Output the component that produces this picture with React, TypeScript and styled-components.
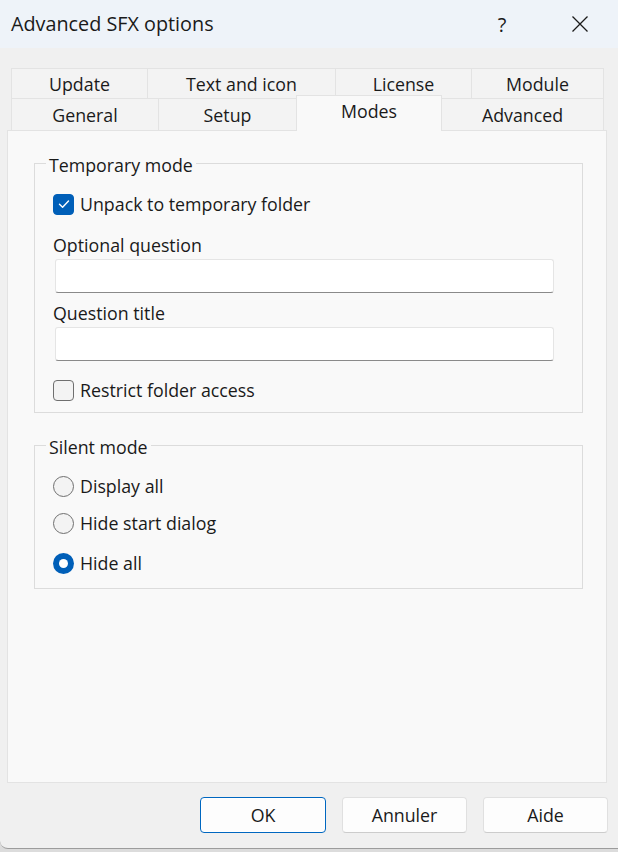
import React, { useState } from 'react';
import styled, { createGlobalStyle, css } from 'styled-components';

const GlobalStyle = createGlobalStyle`
  html, body {
    margin: 0;
    padding: 0;
    background: #dcdcdc;
  }
  body {
    font-family: "Segoe UI", "Open Sans", "Noto Sans", sans-serif;
    font-size: 17.8px;
    color: #1a1a1a;
  }
  * { box-sizing: border-box; }
`;

const Dialog = styled.div`
  width: 618px;
  height: 849px;
  display: flex;
  flex-direction: column;
  background: #f0f0f0;
  border-bottom: 1px solid #9c9c9c;
  border-bottom-left-radius: 8px;
  overflow: hidden;
`;

const TitleBar = styled.div`
  height: 48px;
  flex: none;
  display: flex;
  align-items: center;
  background: #eef3f9;
`;

const Title = styled.div`
  flex: 1;
  padding-left: 11px;
  font-size: 19.8px;
  line-height: 24px;
`;

const CaptionButton = styled.div<{ $w: number }>`
  width: ${({ $w }) => $w}px;
  height: 48px;
  display: flex;
  align-items: center;
  justify-content: center;
  font-size: 20px;
`;

const Body = styled.div`
  flex: 1;
  display: flex;
  flex-direction: column;
  padding: 20px 11px 0 7px;
`;

const TabStrip = styled.div`
  padding-left: 4px;
  padding-right: 4px;
  display: flex;
  flex-direction: column;
`;

const TabRow = styled.div<{ $h: number }>`
  display: flex;
  height: ${({ $h }) => $h}px;
`;

const Tab = styled.div<{ $w: number; $active?: boolean }>`
  width: ${({ $w }) => $w}px;
  flex: none;
  display: flex;
  align-items: center;
  justify-content: center;
  background: #f3f3f3;
  border: 1px solid #e3e3e3;
  border-bottom: none;
  margin-right: -1px;
  line-height: 22px;
  ${({ $active }) => $active && css`
    position: relative;
    z-index: 1;
    background: #f9f9f9;
    margin-top: -3px;
    height: calc(100% + 4px);
    padding-bottom: 5px;
  `}
`;

const Panel = styled.div`
  flex: 1;
  background: #f9f9f9;
  border: 1px solid #e3e3e3;
  padding: 32px 23px 0 26px;
  display: flex;
  flex-direction: column;
  gap: 32px;
`;

const GroupBox = styled.div<{ $pad: string }>`
  position: relative;
  border: 1px solid #dcdcdc;
  padding: ${({ $pad }) => $pad};
  display: flex;
  flex-direction: column;
`;

const Legend = styled.div`
  position: absolute;
  top: -11px;
  left: 11px;
  padding: 0 3px;
  background: #f9f9f9;
  line-height: 24px;
`;

const OptionRow = styled.label<{ $mt?: number }>`
  display: flex;
  align-items: center;
  gap: 6px;
  height: 24px;
  margin-top: ${({ $mt }) => $mt ?? 0}px;
  line-height: 24px;
`;

const CheckBox = styled.span<{ $on?: boolean }>`
  width: 21px;
  height: 21px;
  border-radius: 4px;
  display: flex;
  align-items: center;
  justify-content: center;
  ${({ $on }) => $on
    ? css`background: #005fb8; border: 1px solid #005fb8;`
    : css`background: #f3f3f3; border: 1px solid #6f6f6f;`}
`;

const Radio = styled.span<{ $on?: boolean }>`
  width: 21px;
  height: 21px;
  border-radius: 50%;
  display: flex;
  align-items: center;
  justify-content: center;
  ${({ $on }) => $on
    ? css`
      background: #005fb8;
      &::after {
        content: '';
        width: 9px;
        height: 9px;
        border-radius: 50%;
        background: #fff;
      }
    `
    : css`background: #f3f3f3; border: 1px solid #6f6f6f;`}
`;

const FieldLabel = styled.div<{ $mt: number }>`
  margin-top: ${({ $mt }) => $mt}px;
  line-height: 24px;
`;

const TextInput = styled.input`
  margin: 2px 0 0 2px;
  width: 499px;
  height: 34px;
  background: #fff;
  border: 1px solid #e5e5e5;
  border-bottom: 1px solid #8a8a8a;
  border-radius: 3px;
  font: inherit;
  padding: 0 8px;
  outline: none;
`;

const Footer = styled.div`
  flex: none;
  display: flex;
  justify-content: flex-end;
  gap: 16px;
  padding: 14px 10px 15px 0;
`;

const Button = styled.button<{ $w: number; $default?: boolean }>`
  width: ${({ $w }) => $w}px;
  height: 36px;
  border-radius: 4px;
  background: #fdfdfd;
  font: inherit;
  color: #1a1a1a;
  border: 1px solid #e0e0e0;
  border-bottom-color: #cccccc;
  ${({ $default }) => $default && css`
    border: 1px solid #0067c0;
    box-shadow: inset 0 0 0 1px #ffffff;
  `}
`;

const rowOne = [
  { label: 'Update', w: 137 },
  { label: 'Text and icon', w: 189 },
  { label: 'License', w: 137 },
  { label: 'Module', w: 133 },
];

const rowTwo = [
  { label: 'General', w: 148 },
  { label: 'Setup', w: 139 },
  { label: 'Modes', w: 146 },
  { label: 'Advanced', w: 163 },
];

const silentOptions = ['Display all', 'Hide start dialog', 'Hide all'];
const radioGaps = [0, 13, 16];

const CheckMark = () => (
  <svg width="14" height="14" viewBox="0 0 14 14">
    <path d="M2.5 7.2 L5.6 10.2 L11.5 4" fill="none" stroke="#fff" strokeWidth="1.4" strokeLinecap="round" strokeLinejoin="round" />
  </svg>
);

const CloseIcon = () => (
  <svg width="18" height="18" viewBox="0 0 18 18">
    <path d="M1.5 1.5 L16.5 16.5 M16.5 1.5 L1.5 16.5" stroke="#1a1a1a" strokeWidth="1.3" />
  </svg>
);

const App: React.FC = () => {
  const [tab] = useState('Modes');
  const [unpack, setUnpack] = useState(true);
  const [restrict, setRestrict] = useState(false);
  const [silent, setSilent] = useState('Hide all');

  return (
    <>
      <GlobalStyle />
      <Dialog>
        <TitleBar>
          <Title>Advanced SFX options</Title>
          <CaptionButton $w={80}>?</CaptionButton>
          <CaptionButton $w={76}><CloseIcon /></CaptionButton>
        </TitleBar>
        <Body>
          <TabStrip>
            <TabRow $h={30}>
              {rowOne.map(t => <Tab key={t.label} $w={t.w}>{t.label}</Tab>)}
            </TabRow>
            <TabRow $h={32}>
              {rowTwo.map(t => (
                <Tab key={t.label} $w={t.w} $active={t.label === tab}>{t.label}</Tab>
              ))}
            </TabRow>
          </TabStrip>
          <Panel>
            <GroupBox $pad="28px 28px 10px 18px">
              <Legend>Temporary mode</Legend>
              <OptionRow onClick={() => setUnpack(!unpack)}>
                <CheckBox $on={unpack}>{unpack && <CheckMark />}</CheckBox>
                Unpack to temporary folder
              </OptionRow>
              <FieldLabel $mt={17}>Optional question</FieldLabel>
              <TextInput />
              <FieldLabel $mt={8}>Question title</FieldLabel>
              <TextInput />
              <OptionRow $mt={17} onClick={() => setRestrict(!restrict)}>
                <CheckBox $on={restrict}>{restrict && <CheckMark />}</CheckBox>
                Restrict folder access
              </OptionRow>
            </GroupBox>
            <GroupBox $pad="28px 28px 13px 18px">
              <Legend>Silent mode</Legend>
              {silentOptions.map((o, i) => (
                <OptionRow key={o} $mt={radioGaps[i]} onClick={() => setSilent(o)}>
                  <Radio $on={silent === o} />
                  {o}
                </OptionRow>
              ))}
            </GroupBox>
          </Panel>
        </Body>
        <Footer>
          <Button $w={126} $default>OK</Button>
          <Button $w={125}>Annuler</Button>
          <Button $w={125}>Aide</Button>
        </Footer>
      </Dialog>
    </>
  );
};

export default App;
